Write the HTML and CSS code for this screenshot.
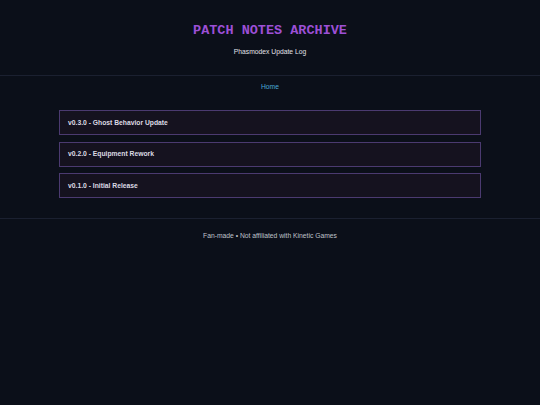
FILE: index.html
```html
<!DOCTYPE html>
<html>
<head>
<meta charset="utf-8">
<link rel="stylesheet" href="styles.css">
</head>
<body>
<header class="site-header">
  <h1 class="title">PATCH NOTES ARCHIVE</h1>
  <p class="subtitle">Phasmodex Update Log</p>
</header>
<nav class="nav"><a href="#" class="nav-link">Home</a></nav>
<main class="content">
  <div class="card">v0.3.0 - Ghost Behavior Update</div>
  <div class="card">v0.2.0 - Equipment Rework</div>
  <div class="card">v0.1.0 - Initial Release</div>
</main>
<footer class="footer">Fan-made • Not affiliated with Kinetic Games</footer>
</body>
</html>
```

FILE: styles.css
```css
html, body {
  margin: 0;
  padding: 0;
  background: #0b0f19;
  color: #e2e2e8;
  font-family: "Liberation Sans", Arial, sans-serif;
  font-size: 6.75px;
}
.site-header {
  text-align: center;
  padding: 22px 0 18px;
  border-bottom: 1px solid #1b2030;
}
.title {
  margin: 0;
  font-family: "Liberation Mono", monospace;
  font-size: 13.5px;
  font-weight: bold;
  color: #9d4fd6;
  line-height: 18px;
}
.subtitle {
  margin: 7px 0 0;
  line-height: 10px;
}
.nav {
  text-align: center;
  padding: 6px 0 5px;
}
.nav-link {
  color: #4aa8d8;
  text-decoration: none;
  line-height: 10px;
}
.content {
  width: 422px;
  margin: 13px auto 20px;
  display: flex;
  flex-direction: column;
  gap: 6.5px;
}
.card {
  background: #15121f;
  border: 1px solid #4b3a70;
  padding: 6.5px 8px;
  font-size: 6.75px;
  font-weight: bold;
  line-height: 10px;
  color: #dcdae4;
}
.footer {
  border-top: 1px solid #1b2030;
  text-align: center;
  padding: 12px 0;
  color: #bfc2ca;
  line-height: 10px;
}
```
